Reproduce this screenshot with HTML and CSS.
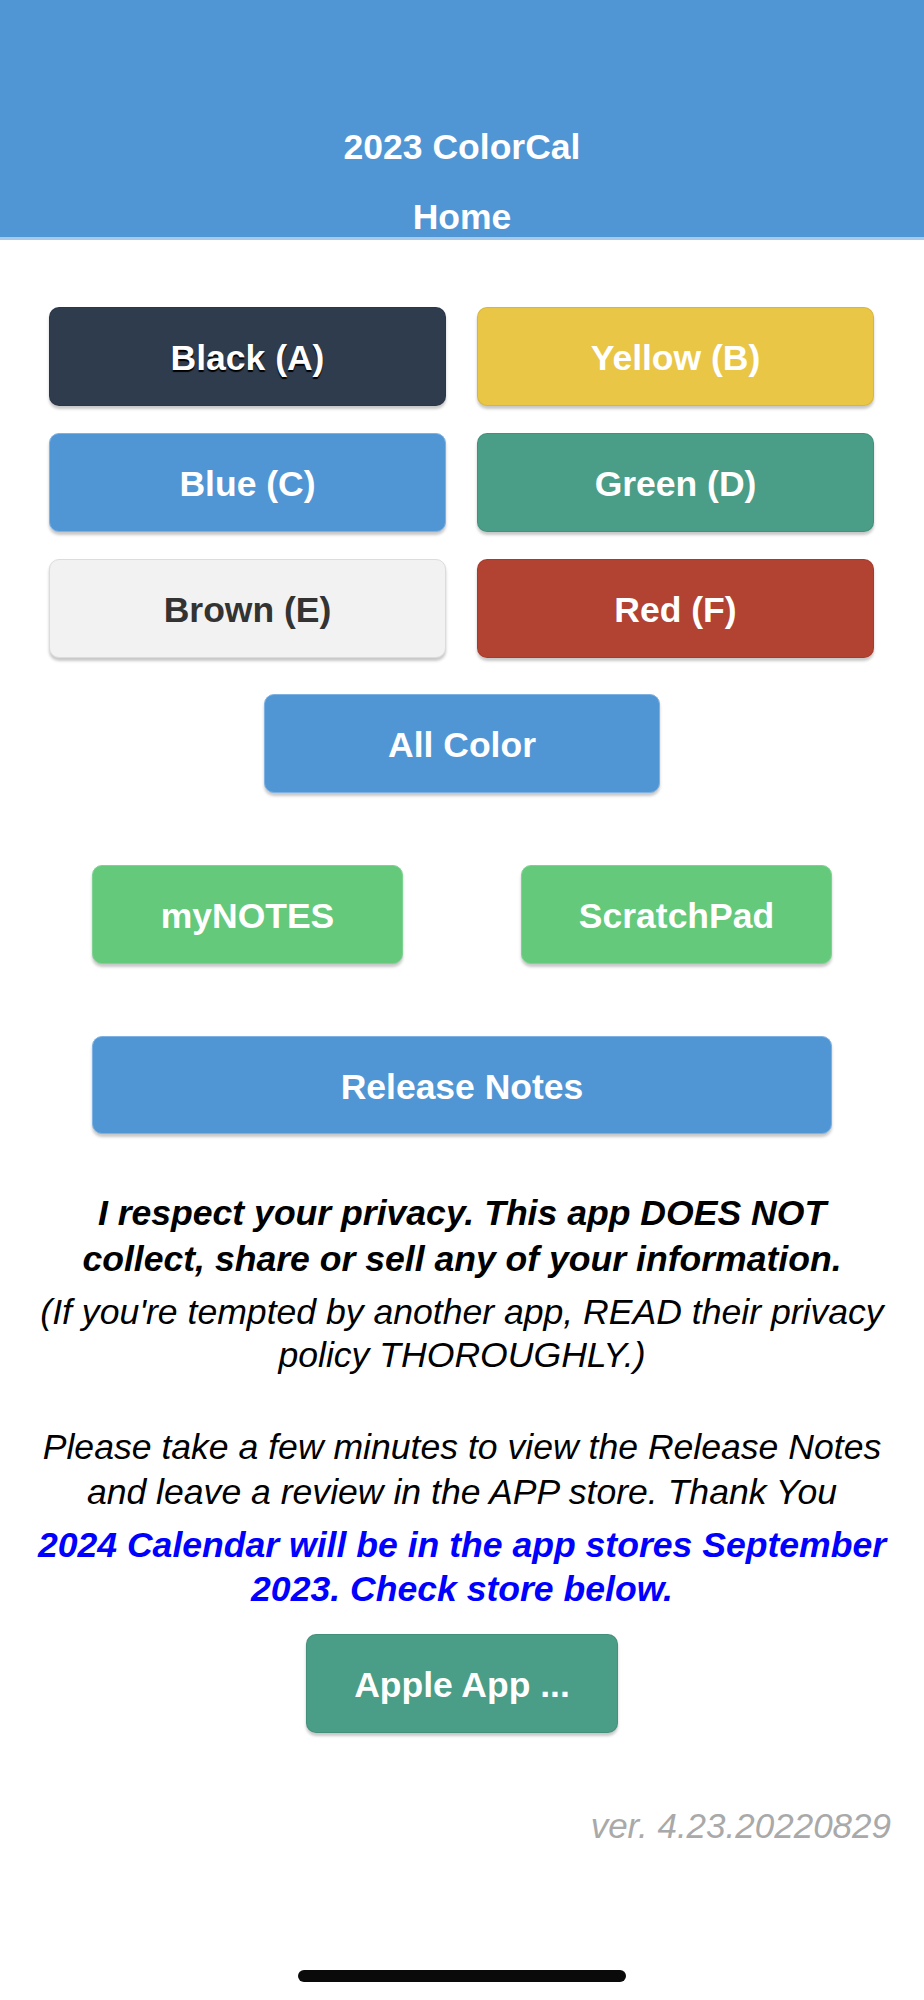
FILE: index.html
```html
<!DOCTYPE html>
<html lang="en">
<head>
    <meta charset="UTF-8">
    <meta name="viewport" content="width=device-width, initial-scale=1.0">
    <title>2023 ColorCal</title>
    <link rel="stylesheet" href="styles.css">
</head>
<body>
    <header class="toolbar">
        <div class="app-title">2023 ColorCal</div>
        <div class="page-title">Home</div>
    </header>

    <main class="content">
        <!-- Colour calendars -->
        <div class="color-grid">
            <button class="btn btn-black">Black (A)</button>
            <button class="btn btn-yellow">Yellow (B)</button>
            <button class="btn btn-blue">Blue (C)</button>
            <button class="btn btn-green">Green (D)</button>
            <button class="btn btn-light">Brown (E)</button>
            <button class="btn btn-red">Red (F)</button>
        </div>

        <button class="btn btn-blue btn-all">All Color</button>

        <div class="tool-row">
            <button class="btn btn-lime btn-tool">myNOTES</button>
            <button class="btn btn-lime btn-tool">ScratchPad</button>
        </div>

        <button class="btn btn-blue btn-wide">Release Notes</button>

        <div class="info">
            <p class="privacy">I respect your privacy. This app DOES NOT<br>collect, share or sell any of your information.</p>
            <p class="hint">(If you're tempted by another app, READ their privacy<br>policy THOROUGHLY.)</p>
            <p class="review">Please take a few minutes to view the Release Notes<br>and leave a review in the APP store. Thank You</p>
            <p class="news">2024 Calendar will be in the app stores September<br>2023. Check store below.</p>
        </div>

        <button class="btn btn-green btn-store">Apple App ...</button>

        <div class="version">ver. 4.23.20220829</div>
    </main>

    <div class="home-indicator"></div>
</body>
</html>
```

FILE: styles.css
```css
body {
    margin: 0;
    font-family: "Liberation Sans", Arial, Helvetica, sans-serif;
    background-color: #ffffff;
    color: #000;
}

/* Header */
.toolbar {
    height: 237px;
    background-color: #5196d4;
    border-bottom: 3px solid #a7c9ea;
    display: flex;
    flex-direction: column;
    justify-content: flex-end;
    align-items: center;
    color: #ffffff;
    font-weight: bold;
    font-size: 35.5px;
}

.app-title {
    line-height: 40px;
    margin-bottom: 30px;
}

.page-title {
    line-height: 40px;
}

/* Buttons */
.content {
    padding-top: 67px;
}

.btn {
    display: block;
    box-sizing: border-box;
    height: 99px;
    border: 1px solid rgba(0, 0, 0, 0.08);
    border-radius: 10px;
    font-family: inherit;
    font-size: 35.5px;
    font-weight: bold;
    color: #ffffff;
    box-shadow: 0 3px 3px rgba(0, 0, 0, 0.22);
    cursor: pointer;
    padding: 4px 0 0;
}

.btn-black {
    background-color: #2f3c4e;
    text-shadow: 0 2px 1px #000;
}
.btn-yellow { background-color: #e9c645; }
.btn-blue { background-color: #5196d4; border-color: #7fb2e2; }
.btn-green { background-color: #4a9d86; }
.btn-light { background-color: #f2f2f2; color: #333333; border-color: #dcdcdc; }
.btn-red { background-color: #b24232; }
.btn-lime { background-color: #64c97a; border-color: #7fd392; }

.color-grid {
    display: grid;
    grid-template-columns: 1fr 1fr;
    column-gap: 31px;
    row-gap: 27px;
    padding: 0 50px 0 49px;
}

.btn-all {
    width: 396px;
    margin: 36px auto 0;
}

.tool-row {
    width: 740px;
    margin: 72px auto 0;
    display: flex;
    justify-content: space-between;
}

.btn-tool {
    width: 311px;
}

.btn-wide {
    width: 740px;
    height: 98px;
    margin: 72px auto 0;
}

/* Text block */
.info {
    margin-top: 56px;
    padding: 0 20px;
    text-align: center;
    font-size: 35.6px;
}

.info p {
    margin: 0;
}

.privacy {
    font-weight: bold;
    font-style: italic;
    line-height: 46px;
}

.hint {
    font-style: italic;
    line-height: 43px;
    margin-top: 9px !important;
}

.review {
    font-style: italic;
    line-height: 45px;
    margin-top: 48px !important;
}

.news {
    color: #0000ff;
    font-weight: bold;
    font-style: italic;
    line-height: 44px;
    margin-top: 8px !important;
}

.btn-store {
    width: 312px;
    margin: 23px auto 0;
}

.version {
    margin-top: 71px;
    padding-right: 33px;
    text-align: right;
    font-size: 35px;
    font-style: italic;
    line-height: 44px;
    color: #a9a9a9;
}

/* iOS home bar overlay */
.home-indicator {
    position: fixed;
    left: 50%;
    bottom: 18px;
    width: 328px;
    height: 12px;
    margin-left: -164px;
    border-radius: 6px;
    background-color: #0a0a0a;
}
```
